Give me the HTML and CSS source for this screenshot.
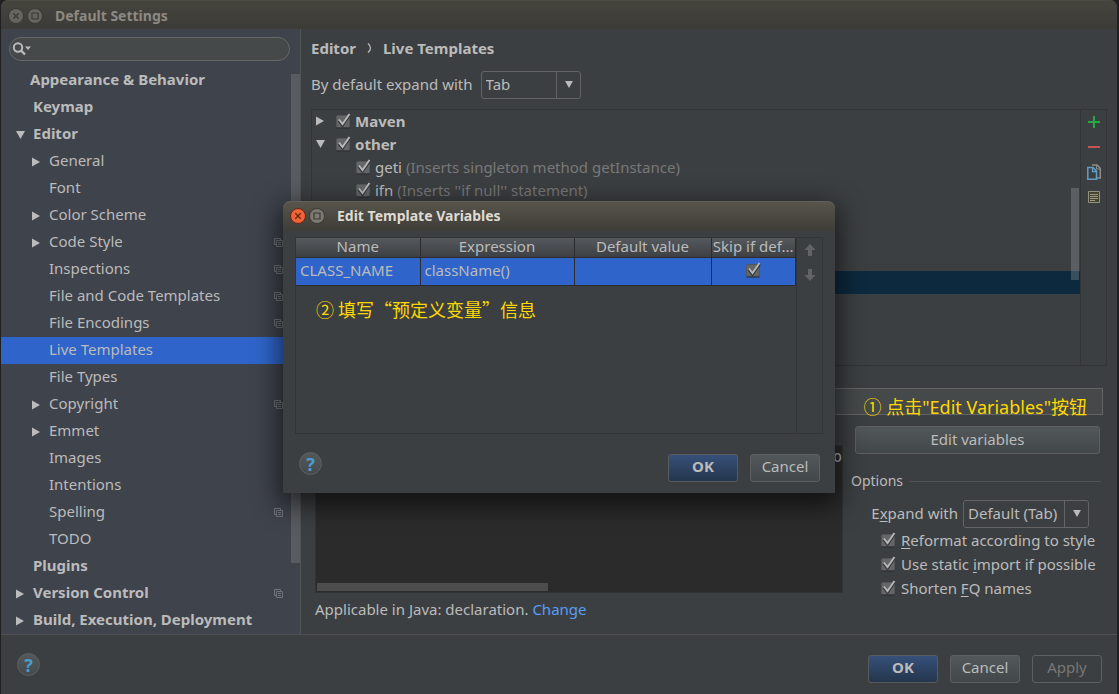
FILE: index.html
```html
<!DOCTYPE html>
<html lang="en">
<head>
<meta charset="utf-8">
<title>Default Settings</title>
<link rel="stylesheet" href="styles.css">
</head>
<body>
<svg class="defs" aria-hidden="true">
  <symbol id="right" viewBox="0 0 8 10"><path d="M0 0.5 8 5 0 9.5z" fill="#bbb"/></symbol>
  <symbol id="down" viewBox="0 0 9 8"><path d="M0 0h9L4.500 8z" fill="#bbb"/></symbol>
  <symbol id="copy" viewBox="0 0 9 9"><path d="M2 6.500H.5V.5h6V2M2.500 2.500h6v6h-6zM4 4.500h3M4 6.500h3" fill="none" stroke="#70747a"/></symbol>
  <symbol id="close" viewBox="0 0 16 16"><circle cx="8" cy="8" r="7.500" stroke-width="1"/><path d="M5.300 5.300l5.400 5.400m0-5.400-5.400 5.400" stroke-width="1.300"/></symbol>
  <symbol id="max" viewBox="0 0 16 16"><circle cx="8" cy="8" r="7.500"/><path d="M5 5h6v6H5z" stroke-width="1.200" fill="none"/></symbol>
</svg>

<div class="window">
  <header class="titlebar">
    <button class="wm" aria-label="Close"><svg width="16" height="16"><use href="#close"/></svg></button>
    <button class="wm" aria-label="Maximize"><svg width="16" height="16"><use href="#max"/></svg></button>
    <h1>Default Settings</h1>
  </header>

  <div class="content">
    <aside class="sidebar">
      <div class="search">
        <svg width="20" height="14" viewBox="0 0 20 14"><circle cx="6" cy="5.500" r="4.200" fill="none" stroke="#bbb" stroke-width="2"/><path d="M9 8.500l4 4" stroke="#bbb" stroke-width="2.400"/><path d="M13 4.500h6l-3 3.500z" fill="#bbb"/></svg>
        <input type="text" aria-label="Search settings">
      </div>
      <ul class="tree">
        <li class="group first"><span class="arrow"></span>Appearance &amp; Behavior</li>
        <li class="group"><span class="arrow"></span>Keymap</li>
        <li class="group"><span class="arrow"><svg width="9" height="8"><use href="#down"/></svg></span>Editor</li>
        <li><span class="arrow"><svg width="8" height="10"><use href="#right"/></svg></span>General</li>
        <li><span class="arrow"></span>Font</li>
        <li><span class="arrow"><svg width="8" height="10"><use href="#right"/></svg></span>Color Scheme</li>
        <li><span class="arrow"><svg width="8" height="10"><use href="#right"/></svg></span>Code Style<svg class="copy" width="9" height="9"><use href="#copy"/></svg></li>
        <li><span class="arrow"></span>Inspections<svg class="copy" width="9" height="9"><use href="#copy"/></svg></li>
        <li><span class="arrow"></span>File and Code Templates<svg class="copy" width="9" height="9"><use href="#copy"/></svg></li>
        <li><span class="arrow"></span>File Encodings<svg class="copy" width="9" height="9"><use href="#copy"/></svg></li>
        <li class="selected"><span class="arrow"></span>Live Templates</li>
        <li><span class="arrow"></span>File Types</li>
        <li><span class="arrow"><svg width="8" height="10"><use href="#right"/></svg></span>Copyright<svg class="copy" width="9" height="9"><use href="#copy"/></svg></li>
        <li><span class="arrow"><svg width="8" height="10"><use href="#right"/></svg></span>Emmet</li>
        <li><span class="arrow"></span>Images</li>
        <li><span class="arrow"></span>Intentions</li>
        <li><span class="arrow"></span>Spelling<svg class="copy" width="9" height="9"><use href="#copy"/></svg></li>
        <li><span class="arrow"></span>TODO</li>
        <li class="group"><span class="arrow"></span>Plugins</li>
        <li class="group"><span class="arrow"><svg width="8" height="10"><use href="#right"/></svg></span>Version Control<svg class="copy" width="9" height="9"><use href="#copy"/></svg></li>
        <li class="group"><span class="arrow"><svg width="8" height="10"><use href="#right"/></svg></span>Build, Execution, Deployment</li>
      </ul>
      <div class="tree-thumb"></div>
    </aside>

    <main class="main">
      <h2 class="crumbs"><span>Editor</span><svg width="5" height="10" viewBox="0 0 5 10"><path d="M1 .5Q6 5 1 9.500" fill="none" stroke="#bbb" stroke-width="1.300"/></svg><span>Live Templates</span></h2>
      <div class="expand">
        <label for="default-expand">By default expand with</label>
        <span class="combo combo-tab"><select id="default-expand"><option>Tab</option><option>Enter</option><option>Space</option></select><svg width="8" height="7" viewBox="0 0 9 8"><use href="#down"/></svg></span>
      </div>

      <div class="templates">
        <div class="template-list">
          <div class="trow"><span class="arrow"><svg width="8" height="10"><use href="#right"/></svg></span><label class="strong"><input type="checkbox" checked>Maven</label></div>
          <div class="trow"><span class="arrow"><svg width="9" height="8"><use href="#down"/></svg></span><label class="strong"><input type="checkbox" checked>other</label></div>
          <div class="trow child"><label><input type="checkbox" checked>geti&nbsp;<span class="dim">(Inserts singleton method getInstance)</span></label></div>
          <div class="trow child"><label><input type="checkbox" checked>ifn&nbsp;<span class="dim">(Inserts ''if null'' statement)</span></label></div>
          <div class="trow"></div>
          <div class="trow"></div>
          <div class="trow"></div>
          <div class="trow current"></div>
          <div class="list-thumb"></div>
        </div>
        <div class="tools">
          <button aria-label="Add"><svg width="12" height="12" viewBox="0 0 12 12"><path d="M6 0v12M0 6h12" stroke="#28a745" stroke-width="2"/></svg></button>
          <button aria-label="Remove"><svg width="12" height="12" viewBox="0 0 12 12"><path d="M0 6h12" stroke="#c75450" stroke-width="2"/></svg></button>
          <button aria-label="Duplicate"><svg width="14" height="16" viewBox="0 0 14 16"><path d="M5 1h5l3.300 3.300V14H10" fill="none" stroke="#8e8e8e" stroke-width="1.500"/><path d="M9.500 1v4h4" fill="none" stroke="#8e8e8e"/><path d="M.8 3.500h5.200l3.500 3.500v8.200H.8z" fill="#3c3f41" stroke="#629dc4" stroke-width="1.500"/><path d="M5.500 3.500v4h4" fill="none" stroke="#629dc4" stroke-width="1.300"/></svg></button>
          <button aria-label="Restore"><svg width="12" height="12" viewBox="0 0 12 12"><path d="M.5.500h11v11H.5z" fill="#46432f" stroke="#92907f"/><path d="M2 3.500h8M2 5.500h8M2 7.500h8M2 9.500h5" stroke="#9c9b8b"/></svg></button>
        </div>
      </div>

      <div class="description">
        <input type="text" aria-label="Description">
        <div class="note note-one">① 点击"Edit Variables"按钮</div>
      </div>

      <div class="detail">
        <section class="text-side">
          <div class="editor"><div class="code">o</div><div class="editor-thumb"></div></div>
          <p class="applicable">Applicable in Java: declaration. <a href="#">Change</a></p>
        </section>
        <section class="options">
          <button class="btn wide">Edit variables</button>
          <h3>Options</h3>
          <div class="with"><label for="expand">E<u>x</u>pand with</label><span class="combo combo-default"><select id="expand"><option>Default (Tab)</option><option>Enter</option></select><svg width="8" height="7" viewBox="0 0 9 8"><use href="#down"/></svg></span></div>
          <label class="check"><input type="checkbox" checked><span><u>R</u>eformat according to style</span></label>
          <label class="check"><input type="checkbox" checked><span>Use static <u>i</u>mport if possible</span></label>
          <label class="check"><input type="checkbox" checked><span>Shorten <u>F</u>Q names</span></label>
        </section>
      </div>
    </main>
  </div>

  <footer class="footer">
    <button class="help" aria-label="Help">?</button>
    <button class="btn primary">OK</button>
    <button class="btn">Cancel</button>
    <button class="btn" disabled>Apply</button>
  </footer>
</div>

<div class="dialog" role="dialog" aria-label="Edit Template Variables">
  <header class="titlebar active">
    <button class="wm red" aria-label="Close dialog"><svg width="16" height="16"><use href="#close"/></svg></button>
    <button class="wm" aria-label="Maximize dialog"><svg width="16" height="16"><use href="#max"/></svg></button>
    <h2>Edit Template Variables</h2>
  </header>
  <div class="variables">
    <div class="table-area">
      <table>
        <colgroup><col class="c-name"><col class="c-expr"><col class="c-def"><col class="c-skip"></colgroup>
        <thead><tr><th>Name</th><th>Expression</th><th>Default value</th><th>Skip if def...</th></tr></thead>
        <tbody><tr><td>CLASS_NAME</td><td>className()</td><td></td><td class="center"><input type="checkbox" checked aria-label="Skip if defined"></td></tr></tbody>
      </table>
      <p class="note note-two" lang="zh-CN">② 填写“预定义变量”信息</p>
    </div>
    <div class="movers">
      <button aria-label="Move up"><svg width="12" height="12" viewBox="0 0 12 12"><path d="M6 0l5.500 6H8v6H4V6H.5z" fill="#616365"/></svg></button>
      <button aria-label="Move down"><svg width="12" height="12" viewBox="0 0 12 12"><path d="M6 12L.5 6H4V0h4v6h3.500z" fill="#616365"/></svg></button>
    </div>
  </div>
  <div class="dialog-foot">
    <button class="help" aria-label="Dialog help">?</button>
    <button class="btn primary">OK</button>
    <button class="btn">Cancel</button>
  </div>
</div>
</body>
</html>
```

FILE: styles.css
```css
* { box-sizing: border-box; }
body {
  margin: 0;
  background: #202020;
  color: #bbb;
  font: 15px/20px "Noto Sans", "Open Sans", "Noto Sans CJK SC", sans-serif;
  position: relative;
}
button, input, select { font: inherit; color: inherit; margin: 0; padding: 0; border: 0; background: none; }
h1, h2, h3, p, ul { margin: 0; padding: 0; font-size: inherit; }
svg { display: block; flex: none; }
.defs { position: absolute; width: 0; height: 0; }

.window {
  min-height: 100vh;
  margin: 0 2px 0 1px;
  display: flex;
  flex-direction: column;
  background: #3c3f41;
  border-radius: 7px 7px 0 0;
  overflow: hidden;
}
.titlebar {
  height: 29px;
  flex: none;
  display: flex;
  align-items: center;
  gap: 3px;
  padding: 1px 7px 0;
  background: linear-gradient(#45443d, #3c3b37);
  border-top: 1px solid #4b4a44;
  color: #8c8a82;
  font-size: 14px;
  font-weight: bold;
}
.titlebar h1, .titlebar h2 { margin-left: 9px; }
.wm { width: 16px; height: 16px; fill: #66655f; stroke: #3a3934; }
.titlebar.active {
  height: 31px;
  padding: 0 7px 2px;
  border-color: #63625a;
  border-radius: 7px 7px 0 0;
  background: linear-gradient(#57554b, #3f3e39 90%, #3c3f41);
  color: #dfdbd2;
}
.active .wm { fill: #7c7a72; }
.active .wm.red { fill: #ee6437; stroke: #6a2410; }

.content { flex: 1; display: flex; }
.sidebar {
  flex: none;
  width: 300px;
  position: relative;
  background: #3f434c;
  border-right: 1px solid #505356;
}
.search {
  margin: 8px 10px 6px 8px;
  height: 24px;
  display: flex;
  align-items: center;
  gap: 4px;
  padding: 0 12px 0 2px;
  border: 1px solid #646868;
  border-radius: 12px;
  background: #45494a;
}
.search input { flex: 1; min-width: 0; }
.tree { list-style: none; }
.tree li {
  height: 27px;
  display: flex;
  align-items: center;
  padding: 0 17px 3px 30px;
  white-space: nowrap;
}
.tree li.group { padding-left: 14px; font-weight: bold; }
.tree li.first { padding-left: 11px; }
.tree li.selected { background: #2f65ca; }
.arrow { width: 18px; flex: none; }
.tree .arrow { padding: 3px 0 0 1px; }
.copy { margin: 3px 0 0 auto; }
.tree-thumb {
  position: absolute;
  top: 45px;
  right: 0;
  bottom: 71px;
  width: 9px;
  background: #595b62;
}

.main {
  flex: 1;
  min-width: 0;
  display: flex;
  flex-direction: column;
  padding: 9px 10px 15px;
}
.crumbs { display: flex; align-items: center; gap: 11px; font-weight: bold; }
.expand { display: flex; align-items: center; gap: 8px; margin: 13px 0 10px; }
.expand label, .with label { padding-bottom: 3px; }
.combo { position: relative; display: flex; height: 28px; }
.combo select {
  appearance: none;
  width: 100%;
  padding: 0 0 3px 4px;
  border: 1px solid #646464;
  border-radius: 3px;
  background: linear-gradient(#646464, #646464) right 23px top / 1px 100% no-repeat;
}
.combo svg { position: absolute; right: 8px; top: 10px; pointer-events: none; }
.combo-tab { width: 100px; }
.combo-default { width: 126px; }

.templates { flex: 1; display: flex; border: 1px solid #323435; }
.template-list { flex: 1; position: relative; }
.trow { height: 23px; display: flex; align-items: center; padding: 0 0 2px 4px; white-space: nowrap; }
.trow .arrow { width: 19px; }
.trow label { display: flex; align-items: center; }
.trow input { margin-right: 4px; }
.trow.child { padding-left: 43px; }
.trow.current { background: #0d293e; }
.strong { font-weight: bold; }
.dim { color: #787878; }
.list-thumb { position: absolute; top: 78px; right: 1px; width: 8px; height: 92px; background: rgba(166, 166, 176, .3); }
.tools { width: 26px; border-left: 1px solid #323435; }
.tools button, .movers button { width: 100%; height: 25px; display: grid; place-items: center; padding-bottom: 2px; }

input[type="checkbox"] {
  appearance: none;
  flex: none;
  width: 16px;
  height: 16px;
}
input[type="checkbox"]:checked {
  background: url("data:image/svg+xml,%3Csvg xmlns='http://www.w3.org/2000/svg' viewBox='0 0 16 16'%3E%3Crect x='1.500' y='2.500' width='13' height='12' rx='1.500' fill='%23646668' stroke='%23545658'/%3E%3Cpath d='M1.500 15h13' stroke='%23292b2c'/%3E%3Cpath d='M4 7.500l3.500 4.500L14.500 2' fill='none' stroke='%23303234' stroke-width='3'/%3E%3Cpath d='M4 6.500l3.500 4.500L14.500 1' fill='none' stroke='%23b8b8b8' stroke-width='2'/%3E%3C/svg%3E") no-repeat;
}

.description { position: relative; margin: 22px 4px 0 87px; }
.description input {
  display: block;
  width: 100%;
  height: 27px;
  border: 1px solid #646464;
  background: #45494a;
}
.note { color: #ffd800; font-size: 18px; line-height: 26px; white-space: nowrap; }
.note-one { position: absolute; right: 16px; top: 6px; font-family: "Noto Sans", "Noto Sans CJK SC", sans-serif; }
.note-two { padding: 10px 0 0 20px; font-family: "Noto Sans CJK SC", sans-serif; }

.detail { display: flex; gap: 8px; padding: 11px 6px 0 4px; }
.text-side { flex: 1; min-width: 0; padding-top: 19px; }
.editor {
  height: 148px;
  display: flex;
  flex-direction: column;
  justify-content: space-between;
  border: 1px solid #323334;
  background: #2b2b2b;
}
.code { text-align: right; font: 15px/22px "DejaVu Sans Mono", monospace; color: #a9b7c6; }
.editor-thumb { width: 44%; height: 8px; margin-left: 1px; margin-bottom: 1px; background: #4d4d4d; }
.applicable { margin-top: 6px; }
.applicable a { color: #589df6; text-decoration: none; }

.options { flex: none; width: 250px; }
.btn {
  width: 70px;
  height: 28px;
  padding-bottom: 3px;
  border: 1px solid #5c6061;
  border-radius: 3px;
  background: linear-gradient(#525859, #424849);
}
.btn.primary { background: linear-gradient(#365079, #25364d); font-weight: bold; border-color: #565b60; }
.btn:disabled { background: none; color: #777; }
.btn.wide { display: block; width: calc(100% - 5px); margin-left: 4px; }
.options h3 {
  display: flex;
  align-items: center;
  gap: 7px;
  margin: 17px 0 9px;
  font-size: 14px;
  font-weight: normal;
}
.options h3::after { content: ""; flex: 1; height: 1px; background: #515455; }
.with { display: flex; align-items: center; justify-content: flex-end; gap: 5px; padding-right: 12px; }
.check { display: flex; align-items: center; gap: 5px; height: 24px; margin-left: 29px; white-space: nowrap; }
u { text-underline-offset: 2px; }

.footer {
  height: 60px;
  flex: none;
  display: flex;
  align-items: center;
  gap: 12px;
  padding: 8px 15px 0 16px;
  border-top: 1px solid #515151;
}
.help {
  width: 23px;
  height: 23px;
  margin-right: auto;
  border: 1px solid #5b6062;
  border-radius: 50%;
  background: linear-gradient(#53585a, #454a4c);
  color: #4a9ccb;
  font-size: 18px;
  line-height: 20px;
  font-weight: bold;
}
.footer .help, .dialog-foot .help { margin-bottom: 8px; }

.dialog {
  position: absolute;
  left: 283px;
  top: 201px;
  width: 552px;
  background: #3c3f41;
  border-radius: 7px 7px 0 0;
  box-shadow: 0 8px 26px 4px rgba(0, 0, 0, .6);
}
.variables {
  display: flex;
  height: 197px;
  margin: 5px 12px 0;
  border: 1px solid #323435;
}
.table-area { flex: 1; min-width: 0; }
.movers { width: 26px; border-left: 1px solid #323435; }
table { width: 100%; table-layout: fixed; border-collapse: collapse; }
.c-name { width: 124px; }
.c-expr { width: 154px; }
.c-def { width: 137px; }
th, td { padding: 0 4px; border-right: 1px solid #2b2c2d; white-space: nowrap; }
th {
  height: 19px;
  padding: 0 0 1px;
  line-height: 17px;
  font-weight: normal;
  background: linear-gradient(#55595d, #3d4043);
  border-bottom: 1px solid #2b2c2d;
}
td { height: 28px; padding-bottom: 2px; background: #2f65ca; border-bottom: 1px solid #2b2c2d; }
.center { text-align: center; }
td input { display: block; margin: 0 auto; }
.dialog-foot { display: flex; align-items: center; gap: 12px; padding: 18px 15px 10px 16px; }
```
